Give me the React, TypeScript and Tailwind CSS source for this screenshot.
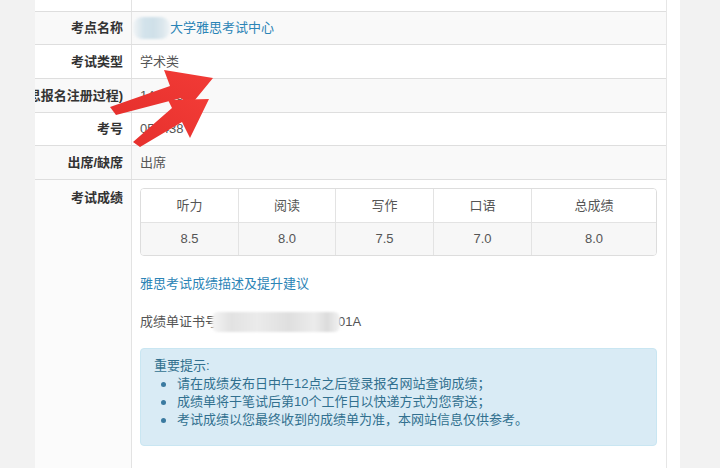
import React from "react";

const FONT = "font-['Liberation_Sans','Noto_Sans_CJK_SC',sans-serif]";

function Row({
  label,
  children,
  h,
  shaded,
}: {
  label: string;
  children?: React.ReactNode;
  h: string;
  shaded?: boolean;
}) {
  return (
    <div className={`flex ${h} border-b border-[#dedede] ${shaded ? "bg-[#f9f9f9]" : "bg-white"}`}>
      <div className="w-[97px] shrink-0 border-r border-[#e3e3e3] flex items-center justify-end overflow-hidden pr-[8px]">
        <span className="whitespace-nowrap font-bold text-[13px] text-[#333]">{label}</span>
      </div>
      <div className="flex-1 flex items-center pl-[8px] text-[13px] text-[#555] whitespace-nowrap">
        {children}
      </div>
    </div>
  );
}

export default function App() {
  const heads = ["听力", "阅读", "写作", "口语", "总成绩"];
  const vals = ["8.5", "8.0", "7.5", "7.0", "8.0"];
  const widths = ["w-[98px]", "w-[97px]", "w-[98px]", "w-[98px]", "flex-1"];
  return (
    <div className={`relative w-[720px] h-[468px] overflow-hidden bg-[#f2f2f2] flex ${FONT}`}>
      <div className="w-[35px] shrink-0 bg-[#f2f2f2]" />
      <div className="w-[645px] shrink-0 bg-white">
        <div className="w-[632px] h-full border-r border-[#e6e6e6] flex flex-col">
          <div className="h-[12px] border-b border-[#dedede] flex">
            <div className="w-[97px] border-r border-[#e3e3e3]" />
          </div>
          <Row label="考点名称" h="h-[33px]" shaded>
            <span className="inline-block w-[37px] h-[22px] -ml-[7px] rounded-[9px] bg-[linear-gradient(90deg,#f1f4f6,#d3e3eb_30%,#cfe0e9_55%,#dce7ed_80%,#eef3f6)] blur-[1px]" />
            <span className="text-[#2b84b6]">大学雅思考试中心</span>
          </Row>
          <Row label="考试类型" h="h-[34px]">
            学术类
          </Row>
          <Row label="准考证号(雅思报名注册过程)" h="h-[34px]" shaded>
            1426653
          </Row>
          <Row label="考号" h="h-[33px]">
            056438
          </Row>
          <Row label="出席/缺席" h="h-[34px]" shaded>
            出席
          </Row>
          <div className="flex flex-1 bg-white">
            <div className="w-[97px] shrink-0 border-r border-[#e3e3e3] bg-[#fbfbfb] flex justify-end pr-[8px] pt-[8px]">
              <span className="font-bold text-[13px] text-[#333] leading-[20px] h-[20px]">考试成绩</span>
            </div>
            <div className="flex-1 pt-[8px] pl-[8px] pr-[9px]">
              <div className="border border-[#dddddd] rounded-[4px] overflow-hidden text-[13px] text-[#555]">
                <div className="flex h-[34px] bg-white border-b border-[#e3e3e3]">
                  {heads.map((t, i) => (
                    <div
                      key={t}
                      className={`${widths[i]} flex items-center justify-center ${i < 4 ? "border-r border-[#e3e3e3]" : ""}`}
                    >
                      {t}
                    </div>
                  ))}
                </div>
                <div className="flex h-[32px] bg-[#f7f7f7]">
                  {vals.map((t, i) => (
                    <div
                      key={i}
                      className={`${widths[i]} flex items-center justify-center ${i < 4 ? "border-r border-[#e3e3e3]" : ""}`}
                    >
                      {t}
                    </div>
                  ))}
                </div>
              </div>
              <div className="mt-[18px] text-[13px] leading-[20px] text-[#2b84b6]">雅思考试成绩描述及提升建议</div>
              <div className="mt-[18px] text-[13px] leading-[20px] text-[#555] flex items-center whitespace-nowrap">
                <span>成绩单证书号</span>
                <span className="inline-block w-[128px] h-[20px] -ml-[6px] rounded-[6px] bg-[linear-gradient(90deg,#f4f4f4,#e2e2e2_15%,#ebebeb_35%,#dfdfdf_60%,#ececec_80%,#dcdcdc_90%,#f2f2f2)] blur-[1px]" />
                <span className="-ml-[2px]">01A</span>
              </div>
              <div className="mt-[16px] h-[98px] rounded-[4px] border border-[#c9e6f2] bg-[#d9ebf5] text-[#31708f] text-[13px] leading-[18px] pt-[8px] pl-[13px]">
                <div>重要提示:</div>
                <ul>
                  {[
                    "请在成绩发布日中午12点之后登录报名网站查询成绩；",
                    "成绩单将于笔试后第10个工作日以快递方式为您寄送；",
                    "考试成绩以您最终收到的成绩单为准，本网站信息仅供参考。",
                  ].map((t) => (
                    <li key={t} className="flex items-center h-[18px]">
                      <span className="w-[5px] h-[5px] rounded-full bg-[#3a7aa0] ml-[7px] mr-[11px]" />
                      <span>{t}</span>
                    </li>
                  ))}
                </ul>
              </div>
            </div>
          </div>
        </div>
      </div>
      <div className="flex-1 bg-[#f2f2f2]" />
      <svg className="absolute left-0 top-0 pointer-events-none" width="720" height="468" viewBox="0 0 720 468">
        <defs>
          <linearGradient id="ar" x1="0" y1="1" x2="1" y2="0">
            <stop offset="0" stopColor="#e6302d" />
            <stop offset="1" stopColor="#f23b36" />
          </linearGradient>
        </defs>
        <path d="M110 107 L170 86 L164 70 L213 78 L190 106 L181 98 L116 115 Z" fill="url(#ar)" />
        <path d="M133 142 L172 108 L168 100 L209 99 L190 138 L182 122 L140 147 Z" fill="url(#ar)" />
      </svg>
    </div>
  );
}
